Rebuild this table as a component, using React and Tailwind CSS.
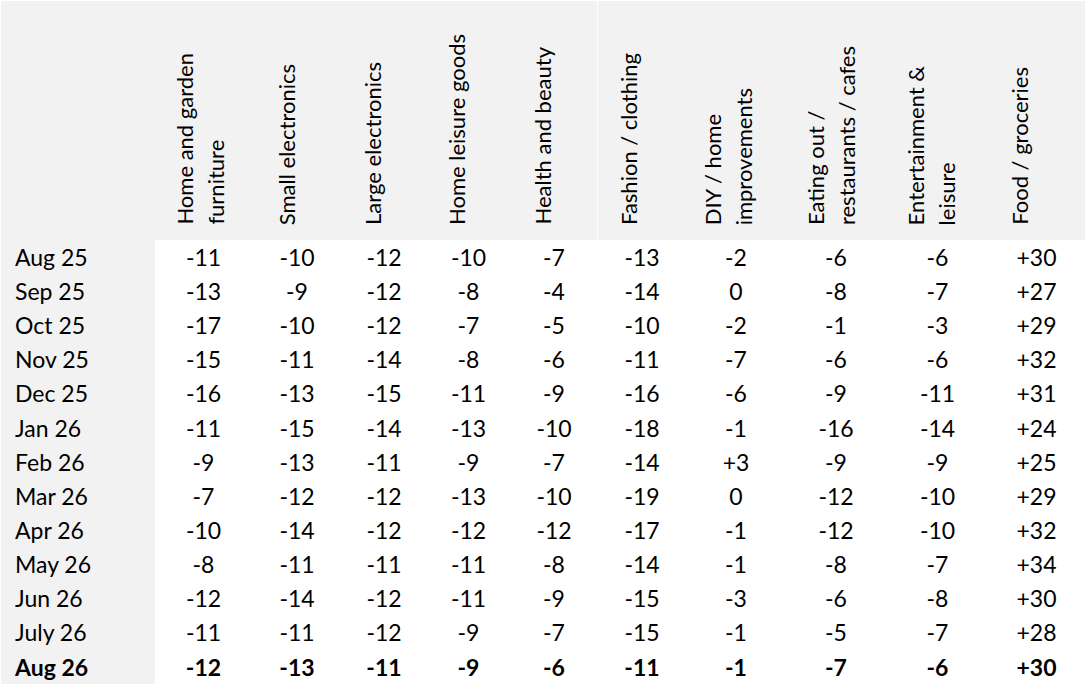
import React from "react";

const headers = [
  { lines: ["Home and garden", "furniture"], cls: "pr-[7px]" },
  { lines: ["Small electronics"], cls: "pr-[22px]" },
  { lines: ["Large electronics"], cls: "pr-6" },
  { lines: ["Home leisure goods"], cls: "pr-[25px]" },
  { lines: ["Health and beauty"], cls: "pr-6" },
  { lines: ["Fashion / clothing"], cls: "pr-[28px] border-l border-white" },
  { lines: ["DIY / home", "improvements"], cls: "pr-4" },
  { lines: ["Eating out /", "restaurants / cafes"], cls: "pr-[10px]" },
  { lines: ["Entertainment &", "leisure"], cls: "pr-[13px]" },
  { lines: ["Food / groceries"], cls: "pr-[34px]" },
];

const rows = [
  ["Aug 25", "-11", "-10", "-12", "-10", "-7", "-13", "-2", "-6", "-6", "+30"],
  ["Sep 25", "-13", "-9", "-12", "-8", "-4", "-14", "0", "-8", "-7", "+27"],
  ["Oct 25", "-17", "-10", "-12", "-7", "-5", "-10", "-2", "-1", "-3", "+29"],
  ["Nov 25", "-15", "-11", "-14", "-8", "-6", "-11", "-7", "-6", "-6", "+32"],
  ["Dec 25", "-16", "-13", "-15", "-11", "-9", "-16", "-6", "-9", "-11", "+31"],
  ["Jan 26", "-11", "-15", "-14", "-13", "-10", "-18", "-1", "-16", "-14", "+24"],
  ["Feb 26", "-9", "-13", "-11", "-9", "-7", "-14", "+3", "-9", "-9", "+25"],
  ["Mar 26", "-7", "-12", "-12", "-13", "-10", "-19", "0", "-12", "-10", "+29"],
  ["Apr 26", "-10", "-14", "-12", "-12", "-12", "-17", "-1", "-12", "-10", "+32"],
  ["May 26", "-8", "-11", "-11", "-11", "-8", "-14", "-1", "-8", "-7", "+34"],
  ["Jun 26", "-12", "-14", "-12", "-11", "-9", "-15", "-3", "-6", "-8", "+30"],
  ["July 26", "-11", "-11", "-12", "-9", "-7", "-15", "-1", "-5", "-7", "+28"],
  ["Aug 26", "-12", "-13", "-11", "-9", "-6", "-11", "-1", "-7", "-6", "+30"],
];

export default function App() {
  return (
    <div
      className="w-[1085px] h-[688px] bg-white pt-px pl-px text-black text-[23px]"
      style={{ fontFamily: "Lato, 'Liberation Sans', sans-serif" }}
    >
      <div className="grid grid-cols-[154px_97px_90px_84px_85px_86px_90px_98px_102px_101px_97px]">
        <div className="h-[239px] bg-[#f2f2f2]" />
        {headers.map((h, i) => (
          <div
            key={i}
            className={`h-[239px] bg-[#f2f2f2] flex items-end justify-center pb-[15px] ${h.cls}`}
          >
            <div className="[writing-mode:vertical-rl] rotate-180 text-[22px] leading-[31px] whitespace-nowrap">
              {h.lines.map((l, j) => (
                <div key={j}>{l}</div>
              ))}
            </div>
          </div>
        ))}
        {rows.map((r, ri) => {
          const bold = ri === rows.length - 1;
          return (
            <React.Fragment key={ri}>
              <div
                className={`h-[34.15px] bg-[#f2f2f2] pl-[14px] flex items-center ${bold ? "font-bold" : ""}`}
              >
                {r[0]}
              </div>
              {r.slice(1).map((v, ci) => (
                <div
                  key={ci}
                  className={`h-[34.15px] flex items-center justify-center ${bold ? "font-bold" : ""}`}
                >
                  {v}
                </div>
              ))}
            </React.Fragment>
          );
        })}
      </div>
    </div>
  );
}
